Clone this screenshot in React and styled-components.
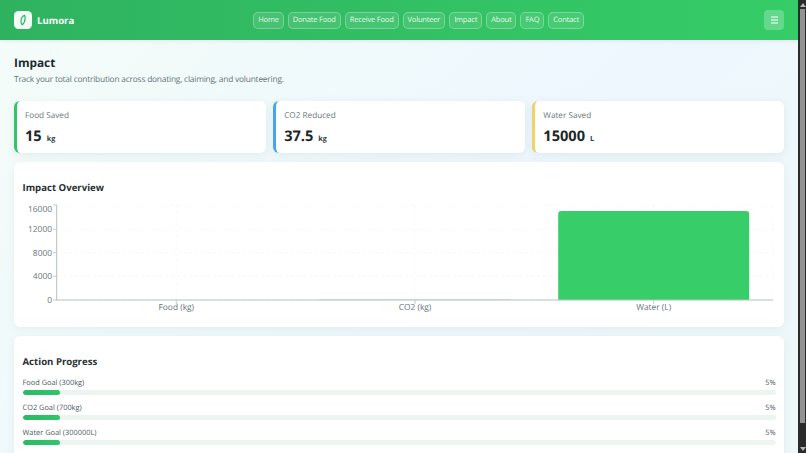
import React from 'react';
import styled, { createGlobalStyle } from 'styled-components';

const GlobalStyle = createGlobalStyle`
  html, body {
    margin: 0;
    padding: 0;
    height: 100%;
    overflow: hidden;
    font-family: "Open Sans", "Noto Sans", sans-serif;
    text-rendering: geometricPrecision;
  }
  * { box-sizing: border-box; }
`;

const Frame = styled.div`
  display: flex;
  width: 806px;
  height: 453px;
  overflow: hidden;
`;

const Page = styled.div`
  flex: 1;
  min-width: 0;
  height: 453px;
  overflow: hidden;
  background: linear-gradient(135deg, #f4fdf8 0%, #eef7fe 55%, #eef8f8 100%);
`;

const Navbar = styled.header`
  height: 40px;
  display: flex;
  align-items: center;
  padding: 0 14px;
  background: linear-gradient(90deg, #2fb260 0%, #35cd67 100%);
  box-shadow: 0 1px 4px rgba(0, 0, 0, 0.08);
`;

const Brand = styled.div`
  display: flex;
  align-items: center;
  gap: 5px;
  color: #fff;
  font-weight: 700;
  font-size: 9.6px;
`;

const LogoBox = styled.div`
  width: 18px;
  height: 18px;
  border-radius: 4.5px;
  background: #f2fbf5;
  display: flex;
  align-items: center;
  justify-content: center;
`;

const NavLinks = styled.nav`
  display: flex;
  gap: 4px;
  margin-left: auto;
  margin-right: 180px;
`;

const NavLink = styled.a`
  height: 17px;
  padding: 0 4px;
  display: flex;
  align-items: center;
  border-radius: 5px;
  border: 1px solid rgba(255, 255, 255, 0.28);
  background: rgba(255, 255, 255, 0.1);
  color: rgba(255, 255, 255, 0.9);
  font-size: 7.5px;
  letter-spacing: -0.18px;
  white-space: nowrap;
`;

const MenuButton = styled.button`
  width: 20px;
  height: 20px;
  padding: 0;
  border: none;
  border-radius: 4px;
  background: rgba(255, 255, 255, 0.24);
  display: flex;
  align-items: center;
  justify-content: center;
`;

const Main = styled.main`
  padding: 14px 14px 0;
`;

const Title = styled.h1`
  margin: 0 0 1px;
  font-size: 11.8px;
  line-height: 18px;
  font-weight: 700;
  color: #1f2a2e;
`;

const Subtitle = styled.p`
  margin: 0;
  font-size: 8.4px;
  line-height: 13px;
  letter-spacing: -0.21px;
  color: #66757a;
`;

const StatGrid = styled.section`
  display: grid;
  grid-template-columns: repeat(3, 1fr);
  gap: 7.5px;
  margin-top: 15px;
`;

const StatCard = styled.div`
  height: 52px;
  padding: 9px 8px 0;
  border-radius: 6px;
  background: #fff;
  border-left: 3px solid ${props => props.$accent};
  box-shadow: 0 2px 8px rgba(60, 110, 100, 0.1);
`;

const StatLabel = styled.div`
  font-size: 8.2px;
  line-height: 12px;
  color: #6b777b;
`;

const StatValue = styled.div`
  margin-top: 4px;
  font-size: 14.6px;
  line-height: 21px;
  font-weight: 700;
  color: #1d2629;
`;

const StatUnit = styled.span`
  margin-left: 5px;
  font-size: 7.2px;
  font-weight: 700;
  color: #333d40;
`;

const Panel = styled.section`
  margin-top: 9px;
  padding: 19px 8.5px 0;
  border-radius: 6px;
  background: #fff;
  box-shadow: 0 2px 8px rgba(60, 110, 100, 0.08);
  height: ${props => props.$height}px;
`;

const PanelTitle = styled.h2`
  margin: 0;
  font-size: 9.6px;
  line-height: 14px;
  font-weight: 700;
  color: #263033;
`;

const ChartBox = styled.div`
  margin: 5px 0 0 -8.5px;
  height: 130px;
`;

const ChartSvg = styled.svg`
  display: block;
  font-family: "Open Sans", sans-serif;
`;

const ProgressList = styled.div`
  margin-top: 9px;
  display: flex;
  flex-direction: column;
  gap: 8px;
`;

const ProgressHead = styled.div`
  display: flex;
  justify-content: space-between;
  font-size: 7.4px;
  line-height: 11px;
  color: #4f5b5f;
`;

const ProgressTrack = styled.div`
  margin-top: 1px;
  height: 5px;
  border-radius: 3px;
  background: #edf5f0;
  overflow: hidden;
`;

const ProgressFill = styled.div`
  height: 100%;
  border-radius: 3px;
  background: linear-gradient(90deg, #2cb866, #2fc66c);
`;

const ScrollTrack = styled.aside`
  width: 8px;
  height: 453px;
  padding-left: 2px;
  padding-right: 1px;
  background: #2b2b2b;
  display: flex;
  flex-direction: column;
  align-items: center;
`;

const ScrollArrow = styled.div`
  height: 9px;
  flex: none;
  display: flex;
  align-items: center;
  justify-content: center;
`;

const ScrollThumb = styled.div`
  width: 5px;
  height: 414px;
  flex: none;
  background: #939393;
`;

const ScrollSpace = styled.div`
  flex: 1;
`;

const navItems = ['Home', 'Donate Food', 'Receive Food', 'Volunteer', 'Impact', 'About', 'FAQ', 'Contact'];

const stats = [
  { label: 'Food Saved', value: '15', unit: 'kg', accent: '#34c468' },
  { label: 'CO2 Reduced', value: '37.5', unit: 'kg', accent: '#4ba3ee' },
  { label: 'Water Saved', value: '15000', unit: 'L', accent: '#f2d260' },
];

const goals = [
  { label: 'Food Goal (300kg)', pct: 5 },
  { label: 'CO2 Goal (700kg)', pct: 5 },
  { label: 'Water Goal (300000L)', pct: 5 },
];

const yTicks = [
  { value: '16000', y: 43, labelY: 49.7 },
  { value: '12000', y: 67.3, labelY: 70.3 },
  { value: '8000', y: 90.7, labelY: 93.7 },
  { value: '4000', y: 114.3, labelY: 117.3 },
  { value: '0', y: 138, labelY: 141 },
];

const categories = [
  { label: 'Food (kg)', x: 176.3, height: 0.1 },
  { label: 'CO2 (kg)', x: 415, height: 0.25 },
  { label: 'Water (L)', x: 653.7, height: 89 },
];

function ImpactChart() {
  return (
    <ChartSvg width="770" height="130" viewBox="14 38 770 130">
      {yTicks.map(t => (
        <line key={t.value} x1="57" x2="773" y1={t.y} y2={t.y} stroke="#f4f7f5" strokeDasharray="3 3" strokeWidth="0.7" />
      ))}
      {categories.map(c => (
        <line key={c.label} x1={c.x} x2={c.x} y1="43" y2="138" stroke="#f4f7f5" strokeDasharray="3 3" strokeWidth="0.7" />
      ))}
      <line x1="773" x2="773" y1="43" y2="138" stroke="#f4f7f5" strokeDasharray="3 3" strokeWidth="0.7" />
      {categories.map(c => (
        <path
          key={c.label}
          fill="#37cd68"
          d={c.height > 4
            ? `M${c.x - 95.5} 138V${138 - c.height + 3}q0-3 3-3H${c.x + 92.5}q3 0 3 3V138Z`
            : `M${c.x - 95.5} 138v${-c.height}h191v${c.height}Z`}
        />
      ))}
      <line x1="56.7" x2="56.7" y1="43" y2="138" stroke="#b4c2bd" />
      <line x1="56.5" x2="773" y1="138" y2="138" stroke="#b4c2bd" />
      {yTicks.map(t => (
        <g key={t.value}>
          <line x1="53" x2="57" y1={t.y} y2={t.y} stroke="#b4c2bd" strokeWidth="0.8" />
          <text x="52" y={t.labelY} textAnchor="end" fontSize="8.4" fill="#66757a">{t.value}</text>
        </g>
      ))}
      {categories.map(c => (
        <g key={c.label}>
          <line x1={c.x} x2={c.x} y1="138" y2="142" stroke="#b4c2bd" strokeWidth="0.8" />
          <text x={c.x} y="148" textAnchor="middle" fontSize="8.4" fill="#66757a">{c.label}</text>
        </g>
      ))}
    </ChartSvg>
  );
}

export default function App() {
  return (
    <Frame>
      <GlobalStyle />
      <Page>
        <Navbar>
          <Brand>
            <LogoBox>
              <svg width="10" height="12" viewBox="0 0 10 12">
                <path d="M6.6 1.2C4.2 2.2 2.8 5 3 7.6c.1 1.5.7 2.7 1.2 3.2 1.6-1.2 2.9-3.6 2.9-6.2 0-1.4-.2-2.6-.5-3.4Z" fill="none" stroke="#2fb864" strokeWidth="1.2" />
              </svg>
            </LogoBox>
            Lumora
          </Brand>
          <NavLinks>
            {navItems.map(item => <NavLink key={item}>{item}</NavLink>)}
          </NavLinks>
          <MenuButton aria-label="menu">
            <svg width="9" height="8" viewBox="0 0 9 8">
              <path d="M1 1h7M1 4h7M1 7h7" stroke="#fff" strokeWidth="1.1" />
            </svg>
          </MenuButton>
        </Navbar>
        <Main>
          <Title>Impact</Title>
          <Subtitle>Track your total contribution across donating, claiming, and volunteering.</Subtitle>
          <StatGrid>
            {stats.map(s => (
              <StatCard key={s.label} $accent={s.accent}>
                <StatLabel>{s.label}</StatLabel>
                <StatValue>{s.value}<StatUnit>{s.unit}</StatUnit></StatValue>
              </StatCard>
            ))}
          </StatGrid>
          <Panel $height={165}>
            <PanelTitle>Impact Overview</PanelTitle>
            <ChartBox><ImpactChart /></ChartBox>
          </Panel>
          <Panel $height={140}>
            <PanelTitle>Action Progress</PanelTitle>
            <ProgressList>
              {goals.map(g => (
                <div key={g.label}>
                  <ProgressHead><span>{g.label}</span><span>{g.pct}%</span></ProgressHead>
                  <ProgressTrack><ProgressFill style={{ width: `${g.pct}%` }} /></ProgressTrack>
                </div>
              ))}
            </ProgressList>
          </Panel>
        </Main>
      </Page>
      <ScrollTrack>
        <ScrollArrow>
          <svg width="6" height="4" viewBox="0 0 6 4"><path d="M3 0l3 4H0Z" fill="#b5b5b5" /></svg>
        </ScrollArrow>
        <ScrollThumb />
        <ScrollSpace />
        <ScrollArrow>
          <svg width="6" height="4" viewBox="0 0 6 4"><path d="M3 4L0 0h6Z" fill="#b5b5b5" /></svg>
        </ScrollArrow>
      </ScrollTrack>
    </Frame>
  );
}
